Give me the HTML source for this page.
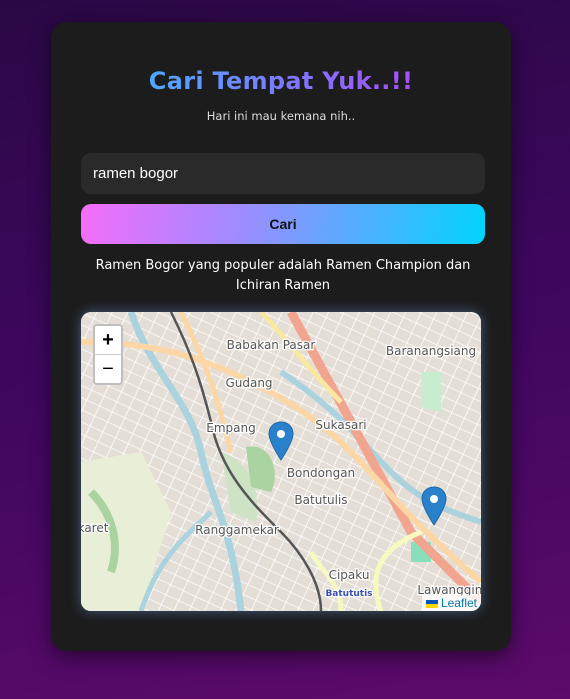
<!DOCTYPE html>
<html><head><meta charset="utf-8"><style>
*{box-sizing:border-box;margin:0;padding:0}
body{width:570px;height:699px;overflow:hidden;background:linear-gradient(170deg,#2a0845 0%,#3f0760 50%,#5c0a6b 100%);font-family:"Liberation Sans","DejaVu Sans",sans-serif}
.card{position:absolute;left:51px;top:22px;width:460px;height:629px;background:#1c1c1c;border-radius:16px;box-shadow:0 6px 20px rgba(0,0,0,.5)}
h1{position:absolute;left:0;right:0;top:45px;text-align:center;font-family:"DejaVu Sans",sans-serif;font-size:24px;font-weight:bold;background:linear-gradient(90deg,#2ec9ff 0%,#8a6bff 60%,#c330f0 100%);-webkit-background-clip:text;background-clip:text;color:transparent;letter-spacing:0.3px}
.sub{position:absolute;left:0;right:0;top:87px;text-align:center;color:#ddd;font-size:11.5px;font-family:"DejaVu Sans",sans-serif}
.inp{position:absolute;left:30px;top:131px;width:404px;height:41px;background:#2a2a2a;border-radius:10px;color:#fff;font-size:15px;padding:12px 12px}
.btn{position:absolute;left:30px;top:182px;width:404px;height:40px;border-radius:10px;background:linear-gradient(100deg,#f56dfa 0%,#9d8cff 40%,#00d4ff 100%);color:#111;font-weight:bold;font-size:14px;text-align:center;line-height:40px}
.res{position:absolute;left:30px;width:404px;top:234px;text-align:center;color:#fff;line-height:19.5px;font-family:"DejaVu Sans",sans-serif;font-size:13px}
.map{position:absolute;left:30px;top:290px;width:400px;height:299px;border-radius:10px;overflow:hidden;background:#efeae2;box-shadow:0 0 12px rgba(120,170,255,.45)}
.zoom{position:absolute;left:12px;top:12px;width:30px;height:61px;background:#fff;border:2px solid rgba(0,0,0,.25);border-radius:4px;font-size:20px;text-align:center;color:#000}
.zoom div{height:29px;line-height:29px}
.zoom div:first-child{border-bottom:1px solid #ccc;font-weight:bold}
.attr{position:absolute;right:0;bottom:0;background:rgba(255,255,255,.8);font-size:12px;color:#0078a8;padding:1px 4px}
</style></head><body>
<div class="card">
<h1>Cari Tempat Yuk..!!</h1>
<div class="sub">Hari ini mau kemana nih..</div>
<div class="inp">ramen bogor</div>
<div class="btn">Cari</div>
<div class="res">Ramen Bogor yang populer adalah Ramen Champion dan Ichiran Ramen</div>
<div class="map">
<svg width="400" height="299" viewBox="0 0 400 299" style="position:absolute;left:0;top:0">
<defs><pattern id="g" width="14" height="11" patternUnits="userSpaceOnUse" patternTransform="rotate(25)"><rect width="14" height="11" fill="#e4ded6"/><path d="M0 0H14M0 0V11" stroke="#fff" stroke-width="1.6"/></pattern></defs>
<rect width="400" height="299" fill="url(#g)"/>
<path d="M0 150 L60 140 L90 200 L60 299 L0 299Z" fill="#e9efd6"/>
<path d="M140 140 C170 150 180 180 175 210 L150 200 Z" fill="#cde3c3"/>
<path d="M165 135 C190 130 200 160 190 180 L170 175Z" fill="#a9d3a0"/>
<path d="M10 180 C30 200 40 230 30 260" stroke="#a9d3a0" stroke-width="8" fill="none"/>
<path d="M340 60 L360 60 L360 100 L340 95Z" fill="#c8ecd0"/>
<path d="M330 230 L350 230 L350 250 L330 250Z" fill="#88dfbb"/>
<path d="M50 0 C70 60 110 90 120 140 C130 190 150 210 160 299" stroke="#aad3df" stroke-width="7" fill="none"/>
<path d="M200 60 C260 100 280 130 310 160 C340 190 370 200 400 210" stroke="#aad3df" stroke-width="6" fill="none"/>
<path d="M60 299 C80 240 110 220 130 200" stroke="#aad3df" stroke-width="5" fill="none"/>
<path d="M210 0 L330 220 L400 290" stroke="#f2a58e" stroke-width="9" fill="none"/>
<path d="M0 30 C60 30 110 40 170 70 C210 90 240 110 270 140 C300 170 330 210 400 270" stroke="#fcd6a4" stroke-width="6" fill="none"/>
<path d="M100 0 C130 60 140 100 150 140" stroke="#fcd6a4" stroke-width="5" fill="none"/>
<path d="M180 0 C200 20 230 60 260 90" stroke="#f8e8a0" stroke-width="5" fill="none"/>
<path d="M300 300 C290 270 290 240 340 220" stroke="#f7fabf" stroke-width="5" fill="none"/>
<path d="M230 240 C240 260 260 270 260 299" stroke="#f7fabf" stroke-width="5" fill="none"/>
<path d="M90 0 C110 40 120 70 130 110 C140 160 170 190 200 220 C220 240 240 270 240 299" stroke="#555" stroke-width="2.5" fill="none"/>
<g font-family="DejaVu Sans,sans-serif" font-size="12" fill="#555" text-anchor="middle" stroke="#fff" stroke-width="2.5" paint-order="stroke">
<text x="190" y="37">Babakan Pasar</text>
<text x="350" y="43">Baranangsiang</text>
<text x="168" y="75">Gudang</text>
<text x="150" y="120">Empang</text>
<text x="260" y="117">Sukasari</text>
<text x="240" y="165">Bondongan</text>
<text x="240" y="192">Batutulis</text>
<text x="156" y="222">Ranggamekar</text>
<text x="12" y="220">karet</text>
<text x="268" y="267">Cipaku</text>
<text x="375" y="282">Lawanggintu</text>
<text x="268" y="284" font-size="9" fill="#3a50b0" font-weight="bold">Batututis</text>
</g>
<g transform="translate(188,110)"><path d="M12 0C5 0 0 5 0 12C0 20 12 38 12 38C12 38 24 20 24 12C24 5 19 0 12 0Z" fill="#2a81cb" stroke="#1f6aa8"/><circle cx="12" cy="12" r="4" fill="#fff"/></g>
<g transform="translate(341,175)"><path d="M12 0C5 0 0 5 0 12C0 20 12 38 12 38C12 38 24 20 24 12C24 5 19 0 12 0Z" fill="#2a81cb" stroke="#1f6aa8"/><circle cx="12" cy="12" r="4" fill="#fff"/></g>
</svg>
<div class="zoom"><div>+</div><div>−</div></div>
<div class="attr"><span style="display:inline-block;width:12px;height:8px;background:linear-gradient(#0057b7 50%,#ffd700 50%);vertical-align:middle"></span> Leaflet</div>
</div>
</div>
</body></html>
